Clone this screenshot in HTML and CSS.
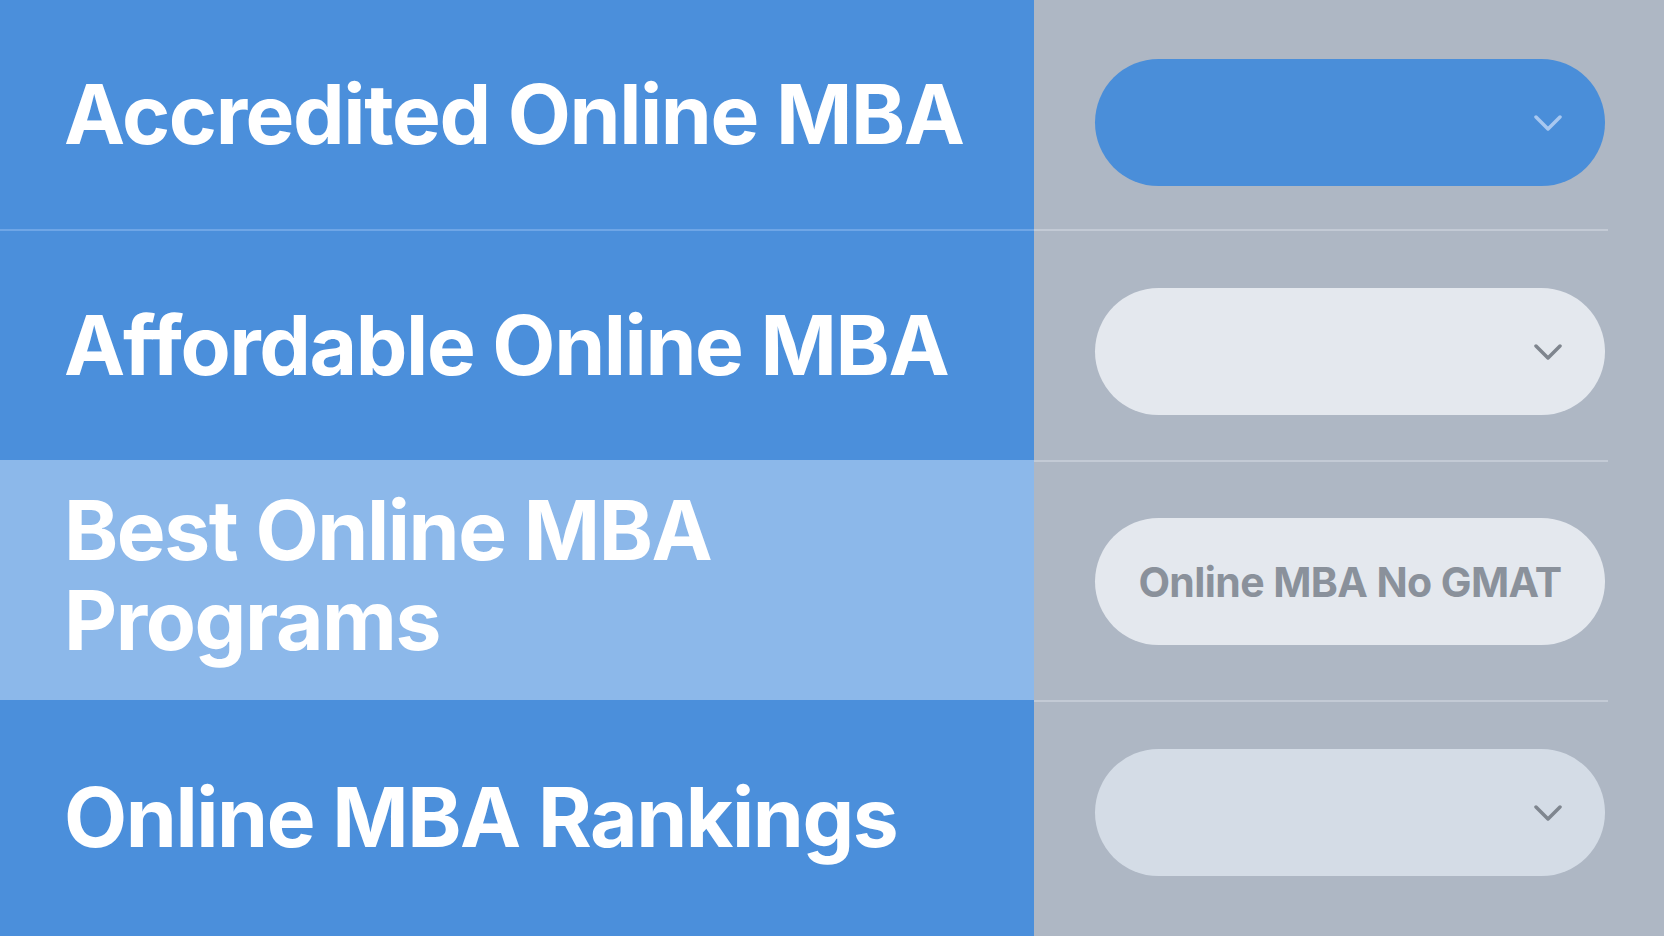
FILE: index.html
```html
<!DOCTYPE html>
<html>
<head>
    <title>Online MBA Topics</title>
    <link rel="stylesheet" href="styles.css">
</head>
<body>
    <div class="topics">
        <div class="row row-first">
            <div class="label">Accredited Online MBA</div>
            <div class="slot">
                <div class="pill pill-blue">
                    <svg class="chevron" viewBox="0 0 28 16"><polyline points="2,2 14,14 26,2"/></svg>
                </div>
            </div>
        </div>

        <div class="row row-second">
            <div class="label">Affordable Online MBA</div>
            <div class="slot">
                <div class="pill pill-light">
                    <svg class="chevron" viewBox="0 0 28 16"><polyline points="2,2 14,14 26,2"/></svg>
                </div>
            </div>
        </div>

        <div class="row row-active">
            <div class="label">Best Online MBA<br>Programs</div>
            <div class="slot">
                <div class="pill pill-light pill-text">Online MBA No GMAT</div>
            </div>
        </div>

        <div class="row row-last">
            <div class="label">Online MBA Rankings</div>
            <div class="slot">
                <div class="pill pill-muted">
                    <svg class="chevron" viewBox="0 0 28 16"><polyline points="2,2 14,14 26,2"/></svg>
                </div>
            </div>
        </div>
    </div>
</body>
</html>
```

FILE: styles.css
```css
body {
    margin: 0;
    font-family: Inter, "Noto Sans", sans-serif;
    background: #aeb7c4;
    overflow: hidden;
}
.topics {
    height: 936px;
    display: grid;
    grid-template-rows: 229px 231px 240px 1fr;
}
.row {
    display: grid;
    grid-template-columns: 1034px 1fr;
}
.label {
    display: flex;
    align-items: center;
    padding-left: 64px;
    background: #4b8fdb;
    color: #fff;
    font-size: 82px;
    font-weight: 700;
    letter-spacing: -1.4px;
    line-height: 90px;
}
.row-second .label {
    border-top: 2px solid #6fa6e6;
}
.row-active .label {
    background: #8cb8ea;
    padding-bottom: 8px;
}
.slot {
    padding: 59px 59px 0 61px;
    background: linear-gradient(#c3cad5, #c3cad5) top left / 574px 2px no-repeat, #aeb7c4;
}
.row-first .slot {
    background: #aeb7c4;
}
.row-active .slot {
    padding-top: 58px;
}
.row-last .slot {
    padding-top: 49px;
}
.pill {
    height: 127px;
    border-radius: 64px;
    display: flex;
    align-items: center;
    justify-content: flex-end;
    padding-right: 43px;
}
.pill-blue {
    background: #4a8ed9;
    color: #a8c8f0;
}
.pill-light {
    background: #e4e8ee;
    color: #7f858e;
}
.pill-muted {
    background: #d4dce6;
    color: #7f868f;
}
.pill-text {
    justify-content: center;
    padding: 0;
    font-size: 41px;
    font-weight: 700;
    letter-spacing: -0.6px;
    color: #8a919b;
}
.chevron {
    width: 28px;
    height: 16px;
    fill: none;
    stroke: currentColor;
    stroke-width: 3.5;
    stroke-linecap: round;
    stroke-linejoin: round;
}
```
